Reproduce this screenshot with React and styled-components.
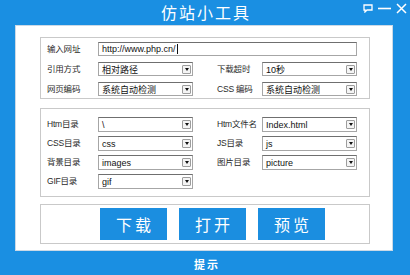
import React from "react";
import styled, { createGlobalStyle } from "styled-components";

const blue = "#1a8fe2";
const cjk = `"Noto Sans CJK SC", "Noto Sans", sans-serif`;

const GlobalStyle = createGlobalStyle`
  html, body {
    margin: 0;
    padding: 0;
    background: ${blue};
  }
  * {
    box-sizing: border-box;
  }
`;

const Window = styled.div`
  display: flex;
  flex-direction: column;
  width: 410px;
  height: 275px;
  background: ${blue};
  font-family: ${cjk};
  overflow: hidden;
`;

const TitleBar = styled.div`
  display: grid;
  grid-template-columns: 1fr auto 1fr;
  align-items: center;
  height: 25px;
`;

const Title = styled.div`
  grid-column: 2;
  color: #fff;
  font-size: 16px;
  letter-spacing: 2px;
  line-height: 25px;
  padding-left: 2px;
`;

const Controls = styled.div`
  grid-column: 3;
  justify-self: end;
  display: flex;
  align-items: flex-start;
  gap: 5px;
  height: 25px;
  padding: 3px 3px 0 0;
`;

const Panel = styled.div`
  display: flex;
  flex-direction: column;
  width: 378px;
  height: 226px;
  margin-left: 15px;
  padding: 11px 0 0 24px;
  background: #fff;
  border: 1px solid #cbd9e6;
`;

const Box = styled.div`
  width: 330px;
  height: ${(p) => p.$h}px;
  margin-bottom: ${(p) => p.$mb || 0}px;
  border: 1px solid #c9c9c9;
  padding: ${(p) => p.$pt}px 0 0 ${(p) => p.$pl ?? 6}px;
`;

const Grid = styled.div`
  display: grid;
  grid-template-columns: 51px 95px 24px 45px 95px;
  grid-auto-rows: ${(p) => p.$rowH}px;
  row-gap: ${(p) => p.$gap}px;
  align-items: center;
`;

const Label = styled.span`
  grid-column: ${(p) => p.$col || 1};
  font-family: "Liberation Sans", ${cjk};
  font-size: 8.5px;
  letter-spacing: -0.2px;
  color: #2a2a2a;
  white-space: nowrap;
  line-height: 1;
`;

const Field = styled.div`
  grid-column: ${(p) => p.$col};
  grid-column-end: ${(p) => p.$end || "auto"};
  display: flex;
  align-items: center;
  justify-content: space-between;
  height: 100%;
  background: #fff;
  border: 1px solid #a6a6a6;
  border-top-color: #6f6f6f;
  padding: 0 1px 0 3px;
  font-family: "Liberation Sans", ${cjk};
  font-size: 9px;
  color: #111;
  white-space: nowrap;
`;

const Caret = styled.i`
  display: inline-block;
  width: 1px;
  height: 10px;
  margin-left: 1px;
  background: #111;
  vertical-align: middle;
`;

const ArrowBtn = styled.span`
  display: flex;
  align-items: center;
  justify-content: center;
  width: 9px;
  height: 9px;
  border: 1px solid #9d9d9d;
  border-radius: 1px;
  background: #f4f4f4;
  &::after {
    content: "";
    border-left: 2.5px solid transparent;
    border-right: 2.5px solid transparent;
    border-top: 3px solid #111;
  }
`;

const ButtonRow = styled.div`
  display: flex;
  gap: 12px;
  padding-left: 59px;
`;

const Button = styled.button`
  width: 67px;
  height: 32px;
  border: none;
  padding: 0 0 0 3px;
  background: #1b8ee0;
  color: #fff;
  font-family: ${cjk};
  font-size: 16px;
  letter-spacing: 3px;
  cursor: pointer;
`;

const Footer = styled.div`
  flex: 1;
  display: flex;
  align-items: center;
  justify-content: center;
  padding: 2px 0 0 4px;
  color: #fff;
  font-size: 11px;
  font-weight: bold;
  letter-spacing: 2px;
`;

const Select = ({ col, children }) => (
  <Field $col={col}>
    <span>{children}</span>
    <ArrowBtn />
  </Field>
);

const Icons = () => (
  <Controls>
    <svg width="10" height="10" viewBox="0 0 10 10">
      <path d="M1 2h8v5H4l-2 2V7H1z" fill="none" stroke="#fff" strokeWidth="1.3" />
    </svg>
    <svg width="13" height="10" viewBox="0 0 13 10">
      <path d="M0 5.5h13" stroke="#fff" strokeWidth="1.6" />
    </svg>
    <svg width="11" height="11" viewBox="0 0 11 11">
      <path d="M1 1l9 9M10 1l-9 9" stroke="#fff" strokeWidth="1.5" />
    </svg>
  </Controls>
);

export default function App() {
  return (
    <>
      <GlobalStyle />
      <Window>
        <TitleBar>
          <Title>仿站小工具</Title>
          <Icons />
        </TitleBar>
        <Panel>
          <Box $h={62} $pt={4} $mb={9}>
            <Grid $rowH={14} $gap={6}>
              <Label>输入网址</Label>
              <Field $col={2} $end={6}>
                <span>
                  http://www.php.cn/
                  <Caret />
                </span>
              </Field>
              <Label>引用方式</Label>
              <Select col={2}>相对路径</Select>
              <Label $col={4}>下载超时</Label>
              <Select col={5}>10秒</Select>
              <Label>网页编码</Label>
              <Select col={2}>系统自动检测</Select>
              <Label $col={4}>CSS 编码</Label>
              <Select col={5}>系统自动检测</Select>
            </Grid>
          </Box>
          <Box $h={89} $pt={8} $mb={7}>
            <Grid $rowH={15} $gap={4}>
              <Label>Htm目录</Label>
              <Select col={2}>\</Select>
              <Label $col={4}>Htm文件名</Label>
              <Select col={5}>Index.html</Select>
              <Label>CSS目录</Label>
              <Select col={2}>css</Select>
              <Label $col={4}>JS目录</Label>
              <Select col={5}>js</Select>
              <Label>背景目录</Label>
              <Select col={2}>images</Select>
              <Label $col={4}>图片目录</Label>
              <Select col={5}>picture</Select>
              <Label>GIF目录</Label>
              <Select col={2}>gif</Select>
            </Grid>
          </Box>
          <Box $h={40} $pt={3} $pl={0}>
            <ButtonRow>
              <Button>下载</Button>
              <Button>打开</Button>
              <Button>预览</Button>
            </ButtonRow>
          </Box>
        </Panel>
        <Footer>提示</Footer>
      </Window>
    </>
  );
}
